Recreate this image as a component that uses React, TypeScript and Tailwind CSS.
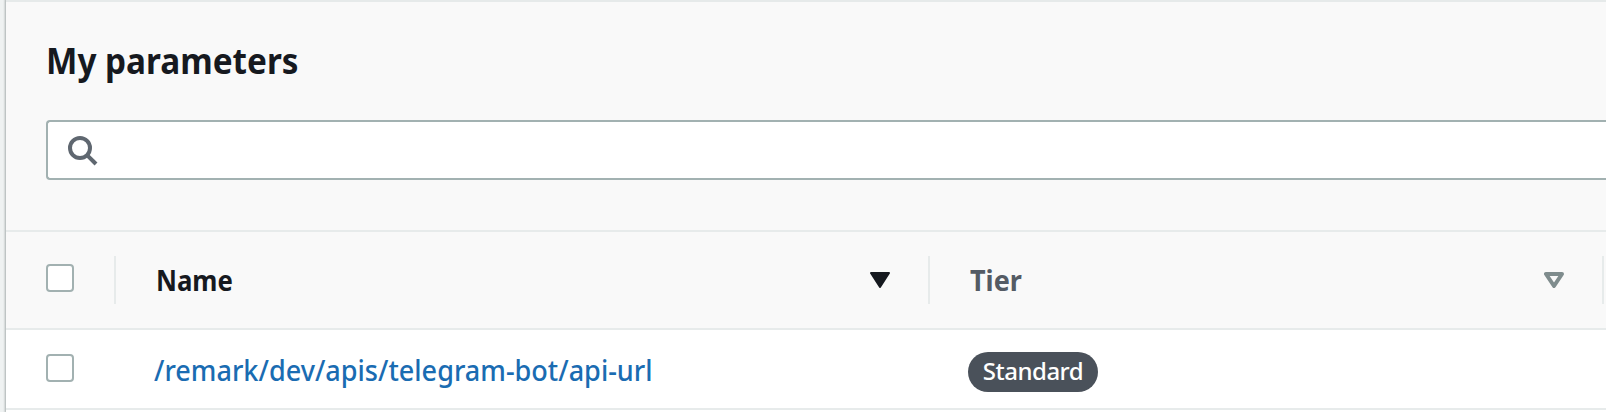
import React from 'react';

function Checkbox({ label }: { label: string }) {
  return (
    <span
      role="checkbox"
      aria-checked="false"
      aria-label={label}
      className="block size-7 rounded-[4px] border-2 border-[#a2b1b1] bg-white"
    />
  );
}

function SearchIcon() {
  return (
    <svg width="30" height="30" viewBox="0 0 30 30" fill="none" stroke="#5f6770" strokeWidth="4">
      <circle cx="12" cy="12" r="10" />
      <path d="M19.3 19.3 28 28" />
    </svg>
  );
}

function SortIcon({ active = false }: { active?: boolean }) {
  return active ? (
    <svg width="20" height="16" viewBox="0 0 20 16" fill="#16191f" stroke="#16191f" strokeWidth="2" strokeLinejoin="round">
      <path d="M1 1H19L10 15Z" />
    </svg>
  ) : (
    <svg width="20" height="16" viewBox="0 0 20 16" fill="none" stroke="#7f8c8d" strokeWidth="4" strokeLinejoin="round">
      <path d="M2 2H18L10 14Z" />
    </svg>
  );
}

function Divider() {
  return <span className="h-12 w-0.5 shrink-0 bg-[#e7ebeb]" />;
}

export default function App() {
  return (
    <div className="h-[412px] w-[1606px] overflow-hidden bg-[#eff2f2] pl-1.5 font-['Noto_Sans','Open_Sans',sans-serif]">
      <main className="h-full border-t-2 border-[#e6eaea] bg-white shadow-[0_0_2px_1px_rgba(0,20,20,0.3)]">
        <header className="h-[230px] border-b-2 border-[#e7ebeb] bg-[#f9f9f9] pl-10 pt-[34px]">
          <h1 className="h-[50px] origin-left scale-x-[0.925] whitespace-nowrap text-[36px] font-bold leading-[50px] text-[#16191f]">
            My parameters
          </h1>
          <div className="mt-[34px] flex h-[60px] items-center rounded-l-[4px] border-2 border-r-0 border-[#a2b1b1] bg-white pl-5 pt-0.5">
            <SearchIcon />
          </div>
        </header>
        <div className="flex h-[98px] items-center border-b-2 border-[#e7ebeb] bg-[#f9f9f9]">
          <div className="flex w-[110px] items-start justify-between pl-10">
            <div className="pt-2">
              <Checkbox label="Select all" />
            </div>
            <Divider />
          </div>
          <div className="flex w-[814px] items-center pl-10">
            <span className="origin-left scale-x-[0.92] text-[28px] font-bold leading-9 text-[#16191f]">Name</span>
            <span className="grow" />
            <SortIcon active />
            <span className="w-[38px]" />
            <Divider />
          </div>
          <div className="flex w-[674px] items-center pl-10">
            <span className="origin-left scale-x-[0.965] text-[28px] font-bold leading-9 text-[#545b64]">Tier</span>
            <span className="grow" />
            <SortIcon />
            <span className="w-[38px]" />
            <Divider />
          </div>
        </div>
        <div className="flex h-20 border-b-2 border-[#e7ebeb]">
          <div className="w-[110px] pl-10 pt-6">
            <Checkbox label="Select row" />
          </div>
          <div className="w-[814px] pl-[38px] pt-[22px]">
            <span className="block origin-left scale-x-[0.966] whitespace-nowrap text-[28px] font-medium leading-9 text-[#1a6cb2]">
              /remark/dev/apis/telegram-bot/api-url
            </span>
          </div>
          <div className="pl-[38px] pt-[22px]">
            <span className="flex h-10 w-[130px] justify-center rounded-full bg-[#4a515a] text-[24px] font-medium leading-[38px] tracking-[-0.5px] text-white">
              Standard
            </span>
          </div>
        </div>
      </main>
    </div>
  );
}
